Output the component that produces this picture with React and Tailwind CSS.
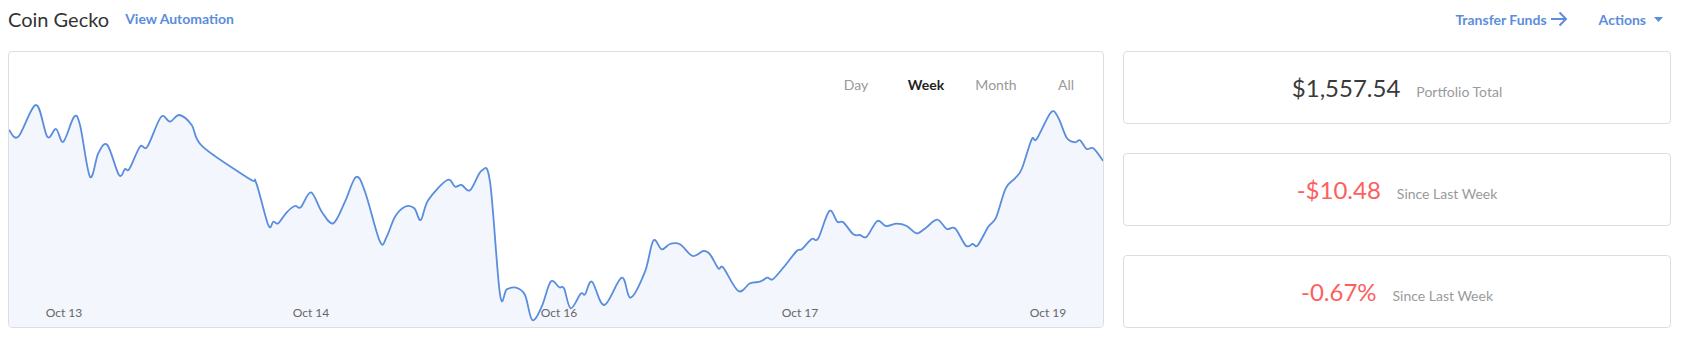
const points = [
    [9, 130], [18.3, 136.7], [36, 105], [47.3, 136.7], [56, 129], [63.3, 141.7], [74, 117], [80, 125],
    [90, 176.7], [98.3, 153.3], [107.3, 145], [119, 175], [125, 169], [129.3, 169], [140, 146.7],
    [147.3, 146.7], [161, 117], [170, 121.7], [179.3, 115], [191.7, 125], [202.7, 146.7], [250, 179.3],
    [256, 182.3], [268.3, 225], [273.3, 221.7], [278.3, 223.3], [286.7, 212.3], [295, 206], [300.7, 207.3],
    [311, 192.3], [321.7, 211.7], [333.3, 223.3], [345, 201.7], [356, 177], [365, 191.7], [380, 241.7],
    [386.7, 236.7], [395, 216.7], [405, 206.7], [414.3, 208.3], [420.7, 220], [428.3, 200], [447.3, 180],
    [455, 186.7], [461.7, 185], [470, 190.3], [481.7, 170.7], [490, 181.7], [500, 294.3], [506.7, 289.3],
    [516, 287.7], [525, 295], [532.3, 320], [541.7, 306.7], [550.7, 281.7], [559.3, 287.3], [564, 288.3],
    [570.7, 308.3], [580.7, 293.7], [585, 294.3], [592, 281.7], [604.3, 305], [621.7, 277.7], [630.7, 297.7],
    [645, 271.7], [653.3, 240.7], [661.7, 249.3], [670, 244], [680, 244.3], [692.7, 256], [703.3, 251],
    [710, 254.3], [718.3, 268.3], [723.3, 267.7], [738.3, 291], [750, 283.3], [760, 281.7], [767.3, 277.7],
    [772.7, 279.3], [783.3, 267.7], [796.7, 251], [801.7, 249.3], [811.7, 239], [818.3, 238.3], [829.3, 211],
    [837.3, 221.7], [843.3, 222.3], [853.3, 234.3], [860, 235], [866.7, 236.7], [877.3, 221], [886, 226],
    [896.7, 223.7], [906.7, 226], [916.7, 233.3], [926, 227.7], [937.3, 219.7], [946.7, 229], [955, 228.3],
    [966, 245.7], [972.7, 244], [977.7, 245.3], [988.3, 226.7], [996, 217.7], [1005.7, 188.3], [1015, 178.3],
    [1021.7, 169], [1031.7, 139.3], [1036.7, 139], [1051, 112.3], [1058.3, 117.7], [1066.7, 137.7],
    [1075, 142.3], [1080, 140.3], [1086.7, 149], [1093.3, 148.3], [1103.3, 161],
]

// catmull-rom -> cubic bezier
function smoothPath(pts) {
    let d = `M${pts[0][0]},${pts[0][1]}`
    for (let i = 0; i < pts.length - 1; i++) {
        const p0 = pts[i - 1] || pts[i]
        const p1 = pts[i]
        const p2 = pts[i + 1]
        const p3 = pts[i + 2] || p2
        const c1x = p1[0] + (p2[0] - p0[0]) / 6
        const c1y = p1[1] + (p2[1] - p0[1]) / 6
        const c2x = p2[0] - (p3[0] - p1[0]) / 6
        const c2y = p2[1] - (p3[1] - p1[1]) / 6
        d += ` C${c1x.toFixed(1)},${c1y.toFixed(1)} ${c2x.toFixed(1)},${c2y.toFixed(1)} ${p2[0]},${p2[1]}`
    }
    return d
}

const line = smoothPath(points)
const area = line + " L1103.3,327 L9,327 Z"

const ticks = [
    { label: "Oct 13", x: 64 },
    { label: "Oct 14", x: 311 },
    { label: "Oct 16", x: 559 },
    { label: "Oct 17", x: 800 },
    { label: "Oct 19", x: 1048 },
]

function StatCard({ value, label, red }) {
    return (
        <div className="h-[73px] border border-[#dedede] rounded-[4px] bg-white flex items-center justify-center">
            <div className="flex items-baseline gap-4 mt-[2px]">
                <span className={`text-[24px] leading-none ${red ? "text-[#fd5e5e]" : "text-[#3a3a3a]"}`}>{value}</span>
                <span className="text-[14px] text-[#9a9a9a]">{label}</span>
            </div>
        </div>
    )
}

export default function App() {
    return (
        <div className="w-[1684px] h-[345px] bg-white font-['Lato','Liberation_Sans',sans-serif]">
            <div className="h-[38px] pl-2 pr-[21px] flex items-center justify-between">
                <div className="flex items-center">
                    <p className="text-[20px] text-[#333]">Coin Gecko</p>
                    <p className="text-[14px] font-bold text-[#5b8ddc] ml-4 mt-[-2px]">View Automation</p>
                </div>

                <div className="flex items-center">
                    <div className="flex items-center text-[#5b8ddc] cursor-pointer">
                        <p className="text-[14px] font-bold">Transfer Funds</p>
                        <svg width="18" height="16" viewBox="0 0 18 16" className="ml-[3px]">
                            <path d="M1 8h15M9.5 1.5 16 8l-6.5 6.5" fill="none" stroke="#5b8ddc" strokeWidth="2" />
                        </svg>
                    </div>

                    <div className="flex items-center text-[#5b8ddc] ml-[31px] cursor-pointer">
                        <p className="text-[14px] font-bold">Actions</p>
                        <svg width="9" height="5" viewBox="0 0 9 5" className="ml-2">
                            <path d="M0 0h9L4.5 5z" fill="#5b8ddc" />
                        </svg>
                    </div>
                </div>
            </div>

            <div className="mt-[13px] pl-2 pr-[13px] flex gap-[19px]">
                <div className="relative w-[1096px] h-[277px] border border-[#dedede] rounded-[4px] overflow-hidden bg-white">
                    <svg className="absolute inset-0" width="1094" height="275" viewBox="9 52 1094 275">
                        <path d={area} fill="#f3f7fd" />
                        <path d={line} fill="none" stroke="#5a8ddd" strokeWidth="1.8" strokeLinejoin="round" />
                    </svg>

                    <div className="relative flex justify-end pt-[22px] pr-[2px] text-[14px]">
                        <p className="w-[70px] text-center text-[#999] cursor-pointer">Day</p>
                        <p className="w-[70px] text-center text-[#222] font-bold cursor-pointer">Week</p>
                        <p className="w-[70px] text-center text-[#999] cursor-pointer">Month</p>
                        <p className="w-[70px] text-center text-[#999] cursor-pointer">All</p>
                    </div>

                    {ticks.map((t) => (
                        <span
                            key={t.label}
                            className="absolute top-[253px] -translate-x-1/2 text-[12px] leading-4 text-[#666]"
                            style={{ left: t.x - 9 }}
                        >
                            {t.label}
                        </span>
                    ))}
                </div>

                <div className="w-[548px] h-[277px] flex flex-col justify-between">
                    <StatCard value="$1,557.54" label="Portfolio Total" />
                    <StatCard value="-$10.48" label="Since Last Week" red />
                    <StatCard value="-0.67%" label="Since Last Week" red />
                </div>
            </div>
        </div>
    )
}
